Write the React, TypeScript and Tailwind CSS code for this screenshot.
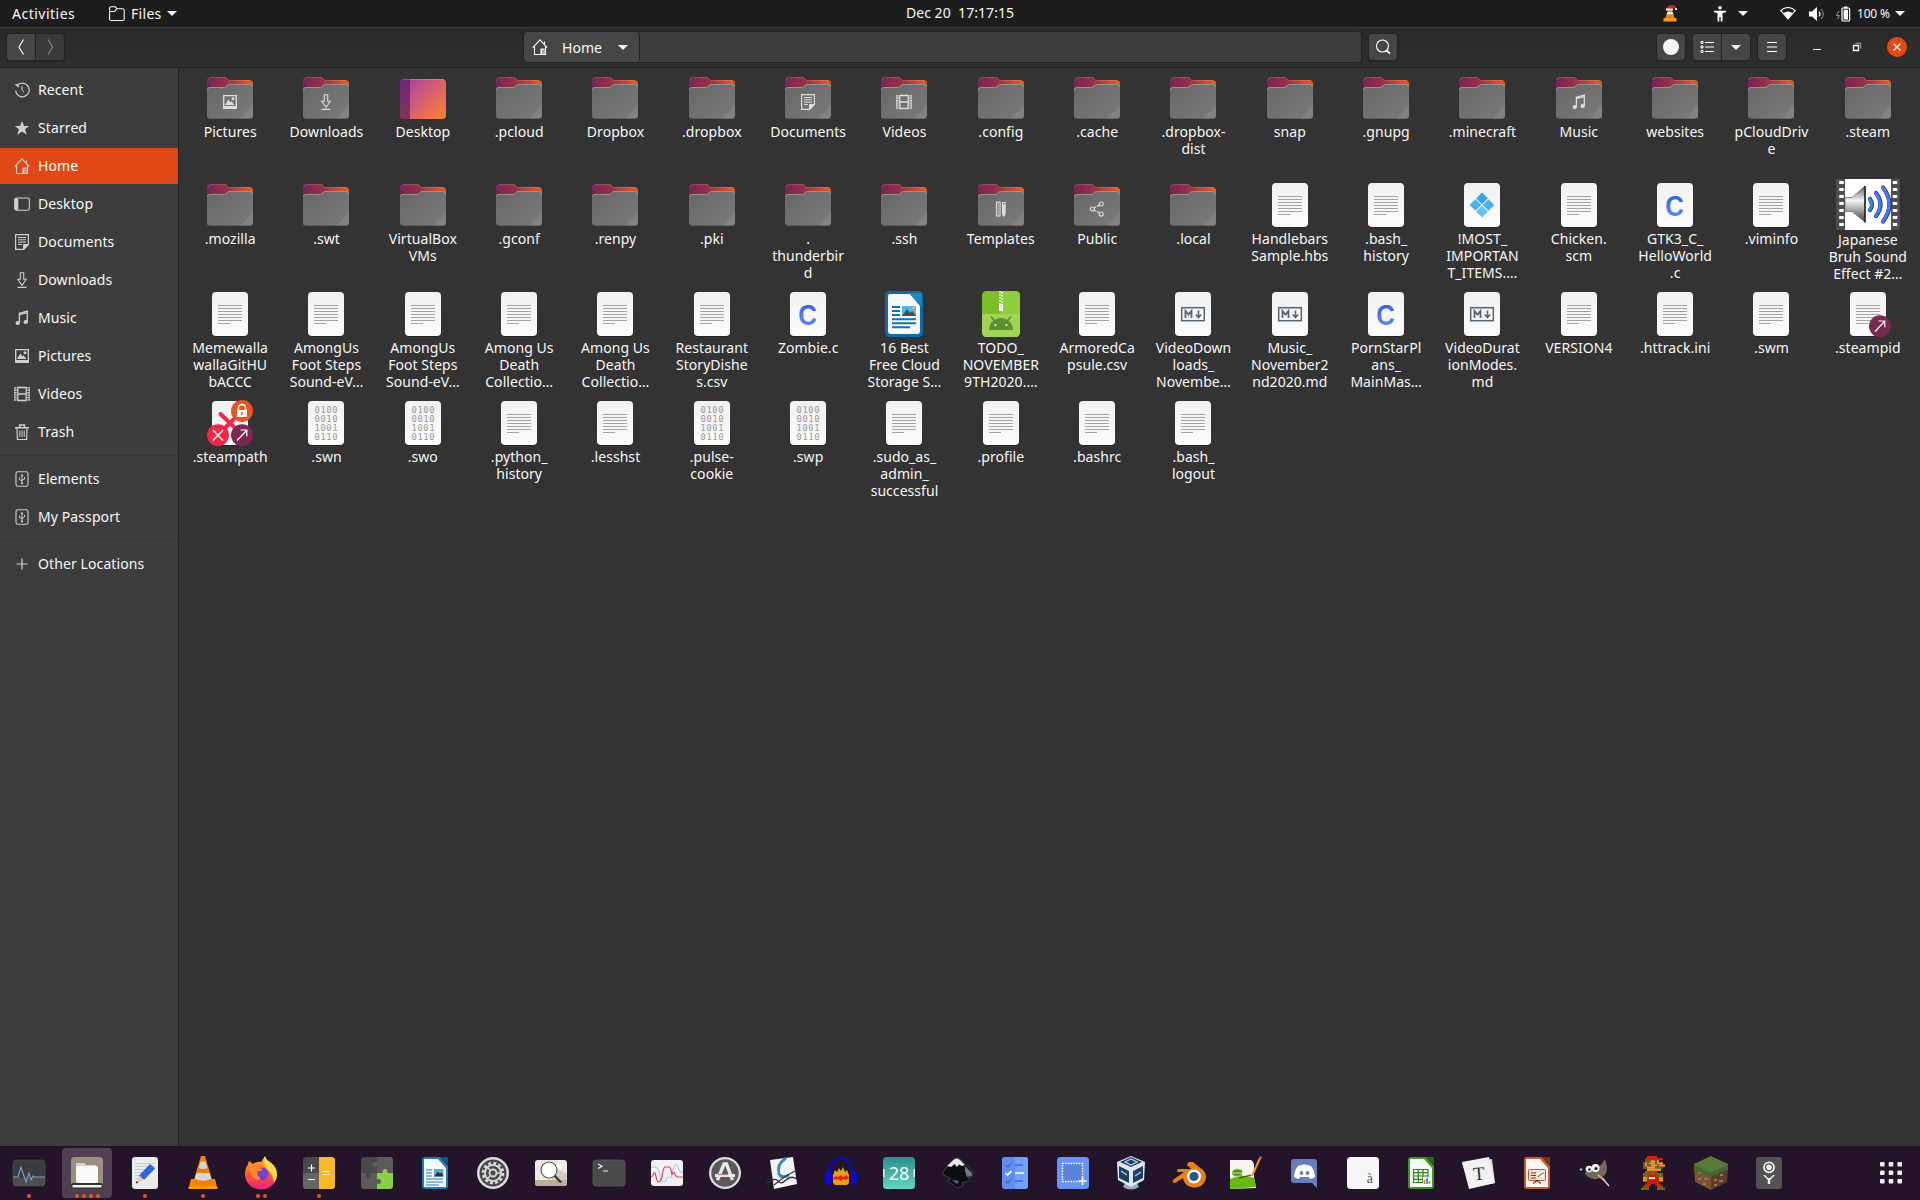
import React from "react";

type Kind = "folder" | "desktop" | "text" | "binary" | "c" | "md" | "reg" | "writer" | "android" | "video" | "link" | "broken";
type Emblem = "pictures" | "downloads" | "documents" | "videos" | "music" | "templates" | "public";
type Item = { k: Kind; e?: Emblem; l: string[] };

const f = (name: string, e?: Emblem): Item => ({ k: "folder", e, l: name.split("|") });
const d = (name: string, k: Kind = "text"): Item => ({ k, l: name.split("|") });

const items: Item[] = [
  f("Pictures", "pictures"), f("Downloads", "downloads"), d("Desktop", "desktop"), f(".pcloud"), f("Dropbox"), f(".dropbox"),
  f("Documents", "documents"), f("Videos", "videos"), f(".config"), f(".cache"), f(".dropbox-|dist"), f("snap"), f(".gnupg"),
  f(".minecraft"), f("Music", "music"), f("websites"), f("pCloudDriv|e"), f(".steam"),
  f(".mozilla"), f(".swt"), f("VirtualBox|VMs"), f(".gconf"), f(".renpy"), f(".pki"), f(".|thunderbir|d"), f(".ssh"),
  f("Templates", "templates"), f("Public", "public"), f(".local"), d("Handlebars|Sample.hbs"), d(".bash_|history"),
  d("!MOST_|IMPORTAN|T_ITEMS.…", "reg"), d("Chicken.|scm"), d("GTK3_C_|HelloWorld|.c", "c"), d(".viminfo"),
  d("Japanese|Bruh Sound|Effect #2…", "video"),
  d("Memewalla|wallaGitHU|bACCC"), d("AmongUs|Foot Steps|Sound-eV…"), d("AmongUs|Foot Steps|Sound-eV…"),
  d("Among Us|Death|Collectio…"), d("Among Us|Death|Collectio…"), d("Restaurant|StoryDishe|s.csv"), d("Zombie.c", "c"),
  d("16 Best|Free Cloud|Storage S…", "writer"), d("TODO_|NOVEMBER|9TH2020.…", "android"), d("ArmoredCa|psule.csv"),
  d("VideoDown|loads_|Novembe…", "md"), d("Music_|November2|nd2020.md", "md"), d("PornStarPl|ans_|MainMas…", "c"),
  d("VideoDurat|ionModes.|md", "md"), d("VERSION4"), d(".httrack.ini"), d(".swm"), d(".steampid", "link"),
  d(".steampath", "broken"), d(".swn", "binary"), d(".swo", "binary"), d(".python_|history"), d(".lesshst"),
  d(".pulse-|cookie", "binary"), d(".swp", "binary"), d(".sudo_as_|admin_|successful"), d(".profile"), d(".bashrc"), d(".bash_|logout"),
];

/* 16px symbolic glyphs, drawn in the current colour */
const glyphs: Record<string, React.ReactNode> = {
  recent: <g fill="none" stroke="currentColor"><path d="M3.2 3.6A6.8 6.8 0 1 1 1.6 8.6" strokeWidth="1.2" /><path d="M8 4v4.2l2.2 2" /><path d="M.6 2.2h4v3.6z" fill="currentColor" stroke="none" /></g>,
  star: <path fill="currentColor" d="M8 1l2 5h5.2l-4.1 3.3 1.5 5.4L8 11.6l-4.6 3.1 1.5-5.4L.8 6H6z" />,
  home: <path fill="none" stroke="currentColor" strokeWidth="1.1" d="M.8 8.7L8 .9l7.2 7.8M2.5 7.5v8h11v-8M12.5 5V2.5M9 15v-5h3v5M10 15v-5" />,
  desktop: <g><rect x=".7" y="2" width="14.6" height="12.2" rx="1.6" fill="none" stroke="currentColor" strokeWidth="1.1" /><path d="M1 2.5h3.3v11.4H1z" fill="currentColor" /></g>,
  documents: <g fill="none" stroke="currentColor"><path d="M1.6.6h12.8v10l-4.6 4.8H1.6z" strokeWidth="1.2" /><path d="M4 3.5h8M4 5.8h8M4 8.1h8M4 10.4h4" strokeWidth="1" /><path d="M9.5 15.5v-5h5z" fill="currentColor" /></g>,
  downloads: <path fill="none" stroke="currentColor" strokeWidth="1.1" d="M6.3.8h3.4v6.5h2.5L8 13.4 3.8 7.3h2.5zM3.5 15.4h9" />,
  music: <g><path d="M5.4 12.7V3.2L13.3 1v10.7M5.4 4.7l7.9-2" fill="none" stroke="currentColor" strokeWidth="1.3" /><ellipse cx="3.7" cy="13" rx="2.2" ry="1.9" fill="currentColor" /><ellipse cx="11.7" cy="12" rx="2.2" ry="1.9" fill="currentColor" /></g>,
  pictures: <g><path d="M1.7 1.7h12.6v12.6H1.7z" fill="none" stroke="currentColor" strokeWidth="1.3" /><path d="M1.5 12h13v2.5h-13zM3 11l3.4-5.4 2 3 1.2-1.4L12.4 11z" fill="currentColor" /><circle cx="11" cy="4.8" r="1.5" fill="currentColor" /></g>,
  videos: <g fill="none" stroke="currentColor"><path d="M3.8 1.5h8.4v13H3.8zM3.8 8h8.4" strokeWidth="1.3" /><path d="M1.6 1.2v13.6M14.4 1.2v13.6" strokeWidth="2" strokeDasharray="1.4 1" /><path d="M.6 1v14M15.4 1v14" strokeWidth=".7" /></g>,
  trash: <g fill="none" stroke="currentColor"><path d="M3 4.5l.4 11h9.2l.4-11" strokeWidth="1.2" /><path d="M1 3.7h14M5.6 3V1h4.8v2" strokeWidth="1.5" /><path d="M5.8 6.5v6.5M8 6.5v6.5M10.2 6.5v6.5" /></g>,
  usb: <g fill="none" stroke="currentColor"><rect x="2" y=".7" width="12" height="14.6" rx="1.8" strokeWidth="1.1" /><path d="M8 12V4M5.5 6.5v2L8 10M10.5 6v2L8 9.4" /><path d="M6.6 5L8 2.7 9.4 5zM7 11.7h2v1.6H7z" fill="currentColor" stroke="none" /></g>,
  plus: <path d="M8 2.5v11M2.5 8h11" stroke="currentColor" strokeWidth="1.2" />,
  templates: <g><path d="M3.5 1h3.6v14H3.5z" fill="none" stroke="currentColor" strokeWidth="1.1" /><path d="M5.4 1.5v13" stroke="currentColor" strokeWidth="1.4" strokeDasharray="1 1" /><path d="M9 1h3.6v11.5l-1 3h-1.600l-1-3z" fill="currentColor" /><path d="M10 2h1.5v1.5H10z" fill="#777" /></g>,
  public: <g fill="none" stroke="currentColor" strokeWidth="1.2"><circle cx="3.3" cy="8" r="2" /><circle cx="12.2" cy="3" r="2" /><circle cx="12.2" cy="13" r="2" /><path d="M5 7l5.4-3M5 9l5.4 3" strokeDasharray="2.4 .8" /></g>,
};

const Glyph = ({ n, className = "" }: { n: string; className?: string }) => (
  <svg viewBox="0 0 16 16" className={`size-4 shrink-0 ${className}`}>{glyphs[n]}</svg>
);

const Sheet = () => <><rect x="6" y="3" width="36" height="44" rx="4" fill="#000" opacity=".3" /><rect x="6" y="2" width="36" height="44" rx="4" fill="url(#paper)" /></>;
const Lines = () => <path d="M12 15.5h24M12 18.5h24M12 21.5h24M12 24.5h24M12 27.5h24M12 30.5h24M12 33.5h12" stroke="#a3a3a3" />;
const LinkBadge = () => <><circle cx="36" cy="36.2" r="11" fill="#7a2a50" /><path d="M31 41.5l9.5-10M34.5 31h6.3v6.3" fill="none" stroke="#fff" strokeWidth="1.2" /></>;

function FileIcon({ item }: { item: Item }) {
  switch (item.k) {
    case "folder":
      return (
        <svg viewBox="0 0 48 48" className="size-12">
          <path d="M1 7a4 4 0 0 1 4-4h14c2 0 2 3 4 3h20.500a3.500 3.500 0 0 1 3.500 3.500V22H1z" fill="url(#fback)" />
          <path d="M1.500 6.500A4 4 0 0 1 5 3.500h14c2 0 2 3 4 3h20.500" fill="none" stroke="#fff" opacity=".15" />
          <path d="M1 16a3 3 0 0 1 3-3h14.500c2 0 2.500-3 4.500-3H44a3 3 0 0 1 3 3v28.500a3.500 3.500 0 0 1-3.500 3.500h-39A3.500 3.500 0 0 1 1 41.500z" fill="url(#ffront)" />
          <path d="M1.500 16a2.500 2.500 0 0 1 2.500-2.500h14.700c2 0 2.500-3 4.500-3H44a2.500 2.500 0 0 1 2.500 2.500" fill="none" stroke="#939393" />
          <path d="M47 31v10.500a3.500 3.500 0 0 1-3.500 3.500H34z" fill="#fff" opacity=".07" />
          <path d="M2 43.500a3.500 3.500 0 0 0 2.500 1h39a3.500 3.500 0 0 0 2.500-1" fill="none" stroke="#000" opacity=".2" />
          {item.e && <g transform="translate(16 20)" color="#dedede">{glyphs[item.e]}</g>}
        </svg>
      );
    case "desktop":
      return (
        <svg viewBox="0 0 48 48" className="size-12">
          <rect x="1" y="5" width="46" height="40" rx="4" fill="url(#desk)" />
          <path d="M5 5h6v40H5a4 4 0 0 1-4-4V9a4 4 0 0 1 4-4z" fill="url(#deskside)" />
          <path d="M4 5.500h40" stroke="#fff" opacity=".2" />
        </svg>
      );
    case "writer":
      return (
        <svg viewBox="0 0 48 48" className="size-12">
          <rect x="5" y="1" width="38" height="46" rx="4.500" fill="#0e6cab" />
          <path d="M10 4h20l10 12v25a3 3 0 0 1-3 3H11a3 3 0 0 1-3-3V6a2 2 0 0 1 2-2z" fill="#fafafa" />
          <path d="M29 3h11a1.500 1.500 0 0 1 1.500 1.500V16z" fill="#2487c2" />
          <path d="M12 17h8M12 21h8M12 25h8M12 29.200h24M12 33.200h24M12 37.200h18" stroke="#1173b3" strokeWidth="2" />
          <rect x="22" y="16" width="14" height="10" fill="#56b4e6" /><path d="M22 26l5-7 3 4 2-2 4 5z" fill="#4c4c4c" /><circle cx="33.500" cy="18" r="1.500" fill="#f5c211" />
        </svg>
      );
    case "android":
      return (
        <svg viewBox="0 0 48 48" className="size-12">
          <rect x="5" y="1" width="38" height="46" rx="4.500" fill="#7cbf2b" /><path d="M24 1h14.500A4.500 4.500 0 0 1 43 5.500V24H24z" fill="#8fcf3c" /><path d="M5 24h38v18.500a4.500 4.500 0 0 1-4.500 4.500h-29A4.500 4.500 0 0 1 5 42.500z" fill="#a0d453" />
          <path d="M23 1v13M25 2v12" stroke="#fff" strokeWidth="1.600" strokeDasharray="1.500 1.500" /><path d="M22 14h4v7h-4z" fill="#fff" /><path d="M23.500 15.500h1v2h-1z" fill="#7cbf2b" />
          <path d="M12 40a12 12 0 0 1 24 0z" fill="#5b9131" /><path d="M14 26.500l4 5M34 26.500l-4 5" stroke="#5b9131" strokeWidth="1.800" /><path d="M17.500 34h2v2h-2zM28.500 34h2v2h-2z" fill="#d8f0b4" />
        </svg>
      );
    case "video":
      return (
        <svg viewBox="0 0 64 51" className="mb-px h-[51px] w-16">
          <path d="M0 0h64v51H0z" fill="#4e4e4e" /><path d="M9 0h46v51H9z" fill="#fff" />
          <path d="M5.500 2v49M59 2v49" stroke="#fff" strokeWidth="4.500" strokeDasharray="3 4" />
          <path d="M9 18.500h7L29 7v36L16 32.500H9z" fill="url(#spk)" stroke="#555" strokeWidth=".6" /><path d="M29 7v36.500" stroke="#222" strokeWidth="1.600" />
          <g fill="none" stroke="#243a80" strokeWidth="4.200" strokeLinecap="round"><path d="M34 20q4 5.500 0 11M40 14q9 11.500 0 23M47 8.500q13 17 0 34" /></g>
          <g fill="none" stroke="#4779f2" strokeWidth="3" strokeLinecap="round"><path d="M33.600 20q4 5.500 0 11M39.600 14q9 11.500 0 23M46.600 8.500q13 17 0 34" /></g>
        </svg>
      );
    default:
      return (
        <svg viewBox="0 0 48 48" className="size-12">
          <Sheet />
          {(item.k === "text" || item.k === "link") && <Lines />}
          {item.k === "link" && <LinkBadge />}
          {item.k === "binary" && (
            <g fill="#999" fontFamily="DejaVu Sans Mono" fontSize="8.800">
              {["0100", "0010", "1001", "0110"].map((t, i) => <text key={t} x="12.500" y={14.400 + i * 9} textLength="23">{t}</text>)}
            </g>
          )}
          {item.k === "c" && <text transform="translate(23.500 34.500) scale(.86 1)" textAnchor="middle" fontFamily="Liberation Sans" fontWeight="700" fontSize="30" fill="url(#cblue)">C</text>}
          {item.k === "md" && (
            <g fill="none" stroke="#566673"><rect x="12.700" y="17.700" width="22.600" height="13" strokeWidth="1.500" /><path d="M16.500 28v-7l3 3.500 3-3.500v7" strokeWidth="1.800" /><path d="M29.500 20.500v6M26.800 24.500l2.700 3 2.700-3" strokeWidth="1.600" /></g>
          )}
          {item.k === "reg" && (
            <g transform="translate(24 24) rotate(45)"><path d="M-8.800-8.800h8.300v8.300h-8.300z" fill="#35a5e5" /><path d="M.5-8.800h8.300v8.300H.5z" fill="#4bb1ea" /><path d="M-8.800.5h8.300v8.300h-8.300z" fill="#4bb1ea" /><path d="M.5.5h8.300v8.300H.5z" fill="#66c2f1" /></g>
          )}
          {item.k === "broken" && (
            <><path d="M14.500 15L24 24l9 9M24 24l-9 9M24 24l9-9" stroke="#ee2b4c" strokeWidth="4" strokeLinecap="round" />
              <circle cx="36" cy="12" r="11" fill="#e95420" /><path d="M31 11h10v7H31z" fill="#fff" /><path d="M32.500 11V9a3.500 3.500 0 0 1 7 0v2" fill="none" stroke="#fff" strokeWidth="1.500" /><path d="M36 13v3" stroke="#e95420" strokeWidth="1.500" />
              <circle cx="12" cy="36.200" r="11" fill="#f0274a" /><path d="M7 31l10 10.500M17 31L7 41.500" stroke="#fff" strokeWidth="1.200" /><LinkBadge /></>
          )}
        </svg>
      );
  }
}

const places: [string, string][][] = [
  [["recent", "Recent"], ["star", "Starred"], ["home", "Home"], ["desktop", "Desktop"], ["documents", "Documents"], ["downloads", "Downloads"], ["music", "Music"], ["pictures", "Pictures"], ["videos", "Videos"], ["trash", "Trash"]],
  [["usb", "Elements"], ["usb", "My Passport"]],
  [["plus", "Other Locations"]],
];

const Arrow = ({ className = "" }: { className?: string }) => (
  <svg viewBox="0 0 10 5" className={`h-[5px] w-2.5 shrink-0 ${className}`}><path d="M0 0h10L5 5z" fill="currentColor" /></svg>
);

const marioRows = [
  "....RRRRR.....", "...RRRRRRRRR..", "...BBBOOBO....", "..BOBOOOBOOO..", "..BOBBOOOBOOO.", "..BBOOOOBBBB..", "....OOOOOOO...",
  "...BBRBBB.....", "..BBBRBBRBBB..", "..BBBRRRRBBB..", "..OOBWWWBROO..", "..OORRRRRROO..", "....RRRRRR....", "...RRR..RRR...", "..BBB....BBB..", ".BBBB....BBBB.",
];
const marioColors: Record<string, string> = { R: "#d8200c", B: "#7d6508", O: "#f49a38", W: "#dfe5f5" };

const box = (c: string) => <rect width="32" height="32" rx="3.500" fill={c} />;

/* launcher icons on a 32 x 32 canvas */
const dock: { name: string; dots?: number; art: React.ReactNode }[] = [
  { name: "System Monitor", dots: 1, art: <><rect y="3" width="32" height="26" rx="3" fill="#3a3c3d" stroke="#505050" strokeWidth=".6" /><path d="M0 20h32v6a3 3 0 0 1-3 3H3a3 3 0 0 1-3-3z" fill="#4b4d4e" /><path d="M0 20h5l3-10 5 15 3-9 2 7 2-4 2 1h10" fill="none" stroke="#7f9fd0" strokeWidth="1.100" /></> },
  { name: "Files", dots: 4, art: <>{box("#9a8f7e")}<rect y="26" width="32" height="6" rx="2" fill="#333" /><path d="M1.500 28h29v2.500h-29z" fill="#f0efe9" /><path d="M5 6h8l2 2h10v5H5z" fill="#dcd5ca" /><rect x="5" y="9" width="22" height="17" rx="2" fill="#fcfaf8" /></> },
  { name: "Text Editor", dots: 1, art: <><rect x="3" width="26" height="32" rx="3" fill="#ececec" /><path d="M6 6.500h20M6 9.500h20M6 12.500h20M6 15.500h14M6 18.500h10M6 21.500h8" stroke="#c9c9c9" /><path d="M21 7l5 4.500L15 23l-5-4.500z" fill="#2f66d8" /><path d="M10 18.500l5 4.500-8 3.500z" fill="#f3c9a0" /><path d="M7.500 24l2 1.500-2.500 1z" fill="#222" /></> },
  { name: "VLC", dots: 1, art: <><path d="M4 22h24l2.500 10h-29z" fill="#f48c0a" /><path d="M1.500 30.500h29" stroke="#ffb020" /><path d="M14-1h4l8 27q-10 5-20 0z" fill="#f07d0c" /><path d="M13.600 4.500h4.800l2 6.500q-4.400 2-8.800 0zM9.400 16h13.200l1.800 6q-8.400 3.500-16.800 0z" fill="#d6d6d6" /></> },
  { name: "Firefox", dots: 2, art: <><path d="M1 11Q3 8 4 4q3 2 4 3 4-3 8-2l4-6q1 4 5 6 7 5 7 13A16 15 0 0 1 0 17q0-4 1-6z" fill="url(#ffx)" /><path d="M20-1q1 4 5 6 7 5 7 13 0 4-3 8-1-9-6-13-6-5-3-14z" fill="#ffda3d" /><circle cx="17" cy="17" r="6.500" fill="#7542d8" /><path d="M4 10q6-2 9 1l5 1q-3 3-6 3 0 4 4 7-6 2-9-3-2-4-3-9z" fill="#ff8a22" /></> },
  { name: "Calculator", dots: 1, art: <>{box("#4a4a4a")}<path d="M0 16h16v16H3.500A3.500 3.500 0 0 1 0 28.500z" fill="#656565" /><path d="M16 0h12.500A3.500 3.500 0 0 1 32 3.500v25a3.500 3.500 0 0 1-3.500 3.500H16z" fill="#fbb826" /><path d="M8.500 7.500v7M5 11h7M5 22.500h7M19.500 14.500h7M19.500 17.500h7" stroke="#fff" strokeWidth="1.100" /></> },
  { name: "Extensions", art: <>{box("#484848")}<path d="M16 0h12.500A3.500 3.500 0 0 1 32 3.500V16H16zM0 16h16v16H3.500A3.500 3.500 0 0 1 0 28.500z" fill="#5b5b5b" /><path d="M16 16h16v12.500a3.500 3.500 0 0 1-3.500 3.500H16z" fill="#8bcf45" /><circle cx="14" cy="7.500" r="2.500" fill="#606060" /><circle cx="7" cy="18" r="2.500" fill="#444" /><circle cx="24" cy="14.500" r="2.500" fill="#8bcf45" /><circle cx="17.500" cy="24.500" r="2.500" fill="#5b5b5b" /></> },
  { name: "Writer", art: <><path d="M6 0h15l8 9v20a3 3 0 0 1-3 3H6a3 3 0 0 1-3-3V3a3 3 0 0 1 3-3z" fill="#1b7db5" /><path d="M5 2h14l8 9v19H5z" fill="#f5f9fc" /><path d="M21 0h8v8z" fill="#0d5582" /><path d="M7 13h6M7 16h6M7 19h6M7 22h17M7 25h17M7 28h13" stroke="#1b7db5" strokeWidth="1.200" /><path d="M15 12h9.500v7.500H15z" fill="#5aaedb" /><path d="M15 19.500l4-5 2 2.500 1.500-2 2 4.500z" fill="#333" /></> },
  { name: "Settings", art: <><circle cx="16" cy="16" r="16" fill="#dcdcdc" /><circle cx="16" cy="16" r="13.500" fill="#474747" /><circle cx="16" cy="16" r="9.800" fill="none" stroke="#d5d5d5" strokeWidth="3" strokeDasharray="3 2.130" /><circle cx="16" cy="16" r="8" fill="none" stroke="#d5d5d5" strokeWidth="2" /><circle cx="16" cy="16" r="3.500" fill="none" stroke="#d5d5d5" strokeWidth="2" /><path d="M13 13L9 9M13 19l-4 4M20 16h5" stroke="#d5d5d5" strokeWidth="1.600" /></> },
  { name: "Image Viewer", art: <><rect y="3" width="32" height="26" rx="3" fill="#eceae2" /><path d="M0 23h32v3a3 3 0 0 1-3 3H3a3 3 0 0 1-3-3z" fill="#b8b09a" /><path d="M24 13l8 4v6H16z" fill="#d5cebc" /><path d="M19.500 18.500l6.500 7" stroke="#333" strokeWidth="2.200" /><circle cx="14" cy="13" r="8" fill="#fff" stroke="#555" strokeWidth="1.200" /><circle cx="24" cy="9" r="2.500" fill="#fff" /></> },
  { name: "Terminal", art: <><rect y="3" width="32" height="26" rx="3" fill="#4a4a4a" stroke="#666" strokeWidth=".6" /><path d="M5 7l4 2.200-4 2.300M10 14h5" fill="none" stroke="#eee" strokeWidth="1.200" /></> },
  { name: "Power Statistics", art: <><rect y="3" width="32" height="26" rx="3" fill="#f2f2f2" /><path d="M0 11q6-3 8 3c2 7 0 11 4 11 5 0 3-5 5-5 4 0 2 4 5-7 2-8 4-6 6 0 2 3 3 2 4 2" fill="none" stroke="#a9cdf0" strokeWidth="1.200" /><path d="M0 20c2 0 2.500-6 4-4 1.500 3 1 9 4 9 4 0 3-15 6-15h4c3 0 2 11 4 6 2-3 2 5 5 4h5" fill="none" stroke="#e0415f" strokeWidth="1.200" /></> },
  { name: "Software", art: <><circle cx="16" cy="16" r="16" fill="#dedede" /><circle cx="16" cy="16" r="13.700" fill="#5a5a5a" /><path d="M8.500 23L15 7h2.500l6 16" fill="none" stroke="#e9e9e9" strokeWidth="3.400" /><path d="M6 18.500h20" stroke="#e9e9e9" strokeWidth="3" /><path d="M9 17.500h10" stroke="#b07aa8" strokeWidth="1" /></> },
  { name: "Document Viewer", art: <><path d="M3 3l23-3 4 27-23 5z" fill="#f2f4f5" /><path d="M19 1q-10 7-7 16 3 5 10 1" fill="none" stroke="#338ac2" strokeWidth="2.800" /><path d="M0 26q8-6 11-2t8-1 11-1M7 28q12-10 23-15" fill="none" stroke="#333" strokeWidth="1.300" /></> },
  { name: "Audacity", art: <><path d="M4 19C3-4 29-4 28 19" fill="none" stroke="#0808d8" strokeWidth="2" /><path d="M8 18l2-5 2 2 2-4 2 3 2-4 2 5 2-2 2 5v8l-2 2H10l-2-2z" fill="#e4a11b" /><path d="M8 21l3-2 2 1 3-2 2 2 3-2 4 3-4 2-3-1-2 2-3-2-3 1z" fill="#f02012" /><path d="M5 13q-7 1-5 11l3 4h4V13zM27 13q7 1 5 11l-3 4h-3V13z" fill="#0a0ae0" /></> },
  { name: "Calendar", art: <>{box("url(#cal)")}<path d="M0 12h1.500v8H0zM30.500 12H32v8h-1.500z" fill="#eee" /><text x="16" y="22.500" textAnchor="middle" fontFamily="Noto Sans" fontSize="18" fill="#f3fffd">28</text></> },
  { name: "Inkscape", art: <><path d="M16 1q2 0 4 2l11 11q2.500 3 0 5l-4 2 2 3-5 1-3 1 1 3-6 2-5-4-5-3 4-2-7-4q-2-2 0-4L12 3q2-2 4-2z" fill="#0c0e12" stroke="#4c5260" strokeWidth=".7" /><path d="M16 1.500q1.500 0 3 1.500l5 5-3 1-3-1.500L16 10l-2.500-3L10 10l-4-1 7-6.500q1.500-1 3-1z" fill="#e6e8ec" /><path d="M24 9l7 7q1 2-1 3l-4 1-2-6z" fill="#6f7887" /><path d="M11 23l7 1-2 3z" fill="#5c6a7e" /></> },
  { name: "To Do", art: <><rect x="3" width="26" height="32" rx="3" fill="#5f8df2" /><path d="M16 0h10a3 3 0 0 1 3 3v26a3 3 0 0 1-3 3H16z" fill="#76a0f7" /><path d="M6.500 8l2 2 4-4M6.500 24l2 2 4-4M16 8h8M16 24h8" fill="none" stroke="#4168c4" strokeWidth="1.400" /><path d="M6.500 16l2 2 4-4M16 16h9" fill="none" stroke="#fff" strokeWidth="1.700" /></> },
  { name: "Screenshot", art: <>{box("#6794f5")}<rect x="5.500" y="6.500" width="20" height="18" fill="#5a84dc" stroke="#fff" strokeWidth="1.400" strokeDasharray="1.500 1.200" /><path d="M25.500 20v8M21.500 24h8" stroke="#fff" strokeWidth="1.600" /></> },
  { name: "VirtualBox", art: <><path d="M10 26h12l2 4q-8 5-16 0z" fill="#92adc6" /><path d="M16-1l14 6-1 18-13 7-13-7L2 5z" fill="#dfe8f0" /><path d="M16 0l11 5-11 5L5 5zM4 9l10 5v12L4 21zM28 9l-10 5v12l10-5z" fill="#1b3e66" /><path d="M10 5l6-3 6 3-6 3zM6 14l6 4M20 19l6-4" fill="none" stroke="#b9d0e4" strokeWidth="1.300" /></> },
  { name: "Blender", art: <><path d="M17 5l3 0L31 14q4 6 0 12-5 6-13 4-7-2-8-9L2 26q-3 0-2-3l11-8H5q-2-1 0-3h13l-4-4q0-2 2-3z" fill="#ea7f14" /><circle cx="21" cy="19.500" r="7" fill="#fff" /><circle cx="21" cy="19.500" r="4.600" fill="#265787" /></> },
  { name: "Notepadqq", art: <><path d="M-1 3h21q2 1 3 4v13l2 11-26 1z" fill="#f5f5ed" /><path d="M-1 22q12-6 24-1l2 9-26 2z" fill="#69b712" /><path d="M1 15q5-7 11 0-4 5-11 3z" fill="#82c83e" /><path d="M2 14h9M3 18h8M8 21l12-3" stroke="#265010" strokeWidth="1.100" /><path d="M29 1L21 19" stroke="#ed9b22" strokeWidth="2" /><path d="M30-.5l-1.500 3.500" stroke="#c96a6a" strokeWidth="2" /></> },
  { name: "Discord", art: <><path d="M5 2h20a3 3 0 0 1 3 3v26l-5-5H5a3 3 0 0 1-3-3V5a3 3 0 0 1 3-3z" fill="#687ebb" /><path d="M9 9q6-3 13 0 4 5 4 11-3 2-5 2l-1-2h-9l-1 2q-2 0-5-2 0-6 4-11z" fill="#fff" /><circle cx="12.500" cy="16" r="1.900" fill="#687ebb" /><circle cx="18.500" cy="16" r="1.900" fill="#687ebb" /></> },
  { name: "Characters", art: <>{box("#f6f6f6")}<text x="23" y="26" textAnchor="middle" fontFamily="Liberation Serif" fontSize="14" fill="#555">à</text></> },
  { name: "Calc", art: <><path d="M6 0h15l8 9v20a3 3 0 0 1-3 3H6a3 3 0 0 1-3-3V3a3 3 0 0 1 3-3z" fill="#399924" /><path d="M5 2h14l8 9v19H5z" fill="#f8fcf7" /><path d="M21 0h8v8z" fill="#1f6e10" /><path d="M8.500 12.500h14.500v13H8.500zM8.500 15.700h14.500M8.500 19h14.500M8.500 22.300h14.500M13.300 12.500v13M18 12.500v13" fill="none" stroke="#2c851b" strokeWidth="1.200" /><path d="M18 20h7v7h-7z" fill="#f2f2f2" /><path d="M19.500 27v-4M24.500 27v-3" stroke="#e0761f" strokeWidth="1.600" /><path d="M22 27v-6" stroke="#3b7fc4" strokeWidth="1.600" /></> },
  { name: "Typora", art: <><path d="M-1 6L29 2l3 24-24 5z" fill="#d8d8d8" /><path d="M-1 5L26 0l6 26L6 32z" fill="#f2f2f2" /><text x="16" y="23" textAnchor="middle" fontFamily="Liberation Serif" fontSize="19" fill="#333" transform="rotate(-5 16 16)">T</text></> },
  { name: "Impress", art: <><path d="M6 0h15l8 9v20a3 3 0 0 1-3 3H6a3 3 0 0 1-3-3V3a3 3 0 0 1 3-3z" fill="#cb5c27" /><path d="M5 2h14l8 9v19H5z" fill="#fbf7f5" /><path d="M21 0h8v8z" fill="#833008" /><rect x="7.500" y="12.500" width="17" height="11" rx="1" fill="#f7ded0" stroke="#c65320" /><path d="M10 16h5M10 18.500h5M10 21h5M12 26.500l4-3 4 3" fill="none" stroke="#6b3a22" strokeWidth="1.200" /><path d="M17 15h6v5h-6z" fill="#fff" /><path d="M17 20l3-3 3-1" fill="none" stroke="#3c9a3c" strokeWidth="1.200" /></> },
  { name: "GIMP", art: <><path d="M26 2q5 14-3 18-8 5-15-1l-3-3 6-3q9 0 15-11z" fill="#6f6a5c" /><ellipse cx="3" cy="14" rx="3.200" ry="4.500" fill="#1b1f24" /><circle cx="2" cy="12.500" r="1.200" fill="#b8bcc0" /><circle cx="10" cy="12" r="3.300" fill="#f6f6f6" /><circle cx="16.500" cy="11" r="4" fill="#f6f6f6" /><circle cx="10.500" cy="12.500" r="1.300" fill="#111" /><circle cx="17" cy="11.500" r="1.600" fill="#111" /><path d="M19 18l6 5" stroke="#eda34a" strokeWidth="2.200" /><path d="M24 22l6 7" stroke="#d8dde2" strokeWidth="1.400" /></> },
  { name: "Super Mario", art: <g transform="translate(2 -1)">{marioRows.flatMap((r, y) => r.split("").map((c, x) => c === "." ? null : <rect key={`${x}-${y}`} x={x * 2} y={y * 2.120} width="2.060" height="2.180" fill={marioColors[c]} />))}</g> },
  { name: "Minecraft", art: <><path d="M-1 7L16-1l17 8v3l-17 9-17-9z" fill="#57793a" /><path d="M-1 9l17 8v16L0 25z" fill="#7a5239" /><path d="M33 9l-17 8v16l16-8z" fill="#5c3d2a" /><path d="M-1 8l17 8v4l-3-2-2 1-3-3-3 1-3-3-3 1zM33 8l-17 8v4l3-2 3 0 3-3 2 1 3-3 3 1z" fill="#3f6a2c" /><path d="M3 16h3M9 22h4M3 22h3M8 27h3M19 23h3M25 18h3M24 24h4M19 28h3" stroke="#9b7454" strokeWidth="2" /></> },
  { name: "Passwords", art: <><rect x="3" width="26" height="32" rx="3" fill="#525252" /><circle cx="16" cy="10.300" r="5" fill="none" stroke="#f0f0f0" strokeWidth="1.800" /><circle cx="16" cy="10.300" r="2.800" fill="#f0f0f0" /><path d="M10 18h2l3 3h2l3-3h2l-4.800 5v4h-2.400v-4z" fill="#f0f0f0" /></> },
];

const btn = "flex h-7 items-center justify-center border border-[#232323] shadow-[0_1px_1px_rgba(0,0,0,.2)]";

export default function App() {
  return (
    <div className="flex h-[1200px] w-[1920px] flex-col overflow-hidden bg-[#333] font-['Noto_Sans',sans-serif] text-[14px] leading-[17px] tracking-[.05px] text-[#f7f7f7]">
      <svg className="absolute size-0">
        <defs>
          <linearGradient id="fback"><stop stopColor="#762457" /><stop offset=".45" stopColor="#9a3344" /><stop offset="1" stopColor="#f05a22" /></linearGradient>
          <linearGradient id="ffront" x2="1" y2="1"><stop stopColor="#676767" /><stop offset="1" stopColor="#7b7b7b" /></linearGradient>
          <linearGradient id="desk" x2="1" y2=".8"><stop stopColor="#a23aa6" /><stop offset=".5" stopColor="#d05b78" /><stop offset="1" stopColor="#fb7d36" /></linearGradient>
          <linearGradient id="deskside" x2="0" y2="1"><stop stopColor="#6c2677" /><stop offset="1" stopColor="#833559" /></linearGradient>
          <linearGradient id="paper" x2="0" y2="1"><stop stopColor="#f1f1f1" /><stop offset="1" stopColor="#fcfcfc" /></linearGradient>
          <linearGradient id="cblue" x2="0" y2="1"><stop stopColor="#2456dc" /><stop offset="1" stopColor="#6a92f2" /></linearGradient>
          <linearGradient id="spk" x2="0" y2="1"><stop stopColor="#555" /><stop offset=".4" stopColor="#f4f4f4" /><stop offset="1" stopColor="#444" /></linearGradient>
          <linearGradient id="ffx" x2="0" y2="1"><stop stopColor="#ffb52b" /><stop offset=".55" stopColor="#ff5a36" /><stop offset="1" stopColor="#e8207a" /></linearGradient>
          <linearGradient id="cal" x2="0" y2="1"><stop stopColor="#2c8d8d" /><stop offset="1" stopColor="#62d6bf" /></linearGradient>
        </defs>
      </svg>

      <header className="grid h-[27px] shrink-0 grid-cols-[1fr_auto_1fr] items-center bg-[#1d1d1d]">
        <div className="flex items-center pl-3">
          <span className="w-[97px] tracking-[.5px]">Activities</span>
          <svg viewBox="0 0 16 16" className="size-4"><path d="M.6 13V2.300A1.500 1.500 0 0 1 2 .800h4.500l1.500 2h5.500A1.500 1.500 0 0 1 15.200 4.300V13a1.500 1.500 0 0 1-1.500 1.500H2A1.500 1.500 0 0 1 .6 13zM.6 5.500h4.700l2.500-2.700" fill="none" stroke="currentColor" strokeWidth="1.100" /></svg>
          <span className="ml-1.5 w-9 tracking-[.3px]">Files</span>
          <Arrow />
        </div>
        <span className="-mt-0.5 whitespace-pre">Dec 20  17:17:15</span>
        <div className="flex items-center justify-end pr-[15px]">
          <svg viewBox="0 0 14 17" className="mr-[36px] h-[17px] w-3.5"><path d="M2 14l3-9h4l3 9z" fill="#ef820f" /><path d="M4.500 7h5l.8 2.500H3.700z" fill="#eee" /><path d="M.5 13h13v3.500H.5z" fill="#f39a1c" /><path d="M3 5q1-5 6-5 4 0 4 4l-3-1v2z" fill="#d8201c" /><path d="M3 4.500h7M12 4h2" stroke="#fff" strokeWidth="1.800" /></svg>
          <svg viewBox="0 0 14 16" className="mr-[11px] h-4 w-3.5"><circle cx="7" cy="1.800" r="1.800" fill="#fff" /><path d="M1 4.800h12v1.500L9.500 7v8.500H7.700V11H6.300v4.500H4.500V7L1 6.300z" fill="#fff" /></svg>
          <Arrow className="mr-8" />
          <svg viewBox="0 0 16 13" className="mr-[13px] h-[13px] w-4"><path d="M.8 3.500Q8-2.500 15.200 3.500L8 12z" fill="none" stroke="#fff" strokeWidth="1.100" /><path d="M3.500 6Q8 3 12.500 6L8 12z" fill="#fff" /></svg>
          <svg viewBox="0 0 16 14" className="mr-2.5 h-3.5 w-4"><path d="M0 4.500h3L8 0v14L3 9.500H0z" fill="#fff" /><path d="M10 4.500q2 2.500 0 5" fill="none" stroke="#fff" strokeWidth="1.200" /><path d="M12 2q4.500 5 0 10" fill="none" stroke="#999" /></svg>
          <svg viewBox="0 0 16 16" className="mr-1.5 h-4 w-4"><path d="M4 5L1.500 9.500h3L2.500 13" fill="none" stroke="#999" /><rect x="7" y="2" width="7.600" height="13" rx="1" fill="none" stroke="#fff" strokeWidth="1.200" /><path d="M9 .5h3.500v2H9zM8.600 3.800h4.400v9.700H8.600z" fill="#fff" /></svg>
          <span className="w-[38px] text-[12px] tracking-[-.2px]">100 %</span>
          <Arrow />
        </div>
      </header>

      <div className="flex h-[41px] shrink-0 items-center border-t border-b border-t-[#3c3c3c] border-b-[#232323] bg-linear-to-b from-[#2a2a2a] to-[#2e2e2e] px-1.5 pb-px">
        <button className={`${btn} w-[30px] rounded-l bg-[#464646]`}><svg viewBox="0 0 16 16" className="size-4"><path d="M10.500 .5L6 8l4.500 7.500" fill="none" stroke="#fff" strokeWidth="1.100" /></svg></button>
        <button className={`${btn} -ml-px w-[30px] rounded-r bg-[#3a3a3a]`}><svg viewBox="0 0 16 16" className="size-4"><path d="M6 .5L10.500 8 6 15.500" fill="none" stroke="#888" strokeWidth="1.100" /></svg></button>
        <div className="ml-[458px] flex h-8 w-[839px] items-center rounded border border-[#232323] bg-[#3d3d3d]">
          <button className="flex h-[30px] w-[116px] items-center rounded border-r border-[#222] bg-[#464646] pl-2">
            <Glyph n="home" /><span className="ml-[14px] w-[46px] text-left">Home</span><Arrow className="ml-2.5" />
          </button>
        </div>
        <button className={`${btn} ml-[6px] w-[30px] rounded bg-[#464646]`}><svg viewBox="0 0 16 16" className="size-4"><circle cx="7.500" cy="7" r="6" fill="none" stroke="#fff" strokeWidth="1.100" /><path d="M11.500 11.500l3.500 3" stroke="#fff" strokeWidth="1.800" /></svg></button>
        <div className="ml-auto flex items-center">
          <button className={`${btn} mr-1.5 w-[30px] rounded bg-[#464646]`}><span className="size-4 rounded-full bg-[#f7f7f7]" /></button>
          <button className={`${btn} w-[30px] rounded-l bg-[#464646]`}><svg viewBox="0 0 16 16" className="size-4"><path d="M6 3.500h9M6 8h9M6 12.500h9" stroke="#fff" /><path d="M2 2.500h2v2H2zM2 7h2v2H2zM2 11.500h2v2H2z" fill="none" stroke="#fff" /></svg></button>
          <button className={`${btn} -ml-px mr-1.5 w-[30px] rounded-r bg-[#464646]`}><Arrow /></button>
          <button className={`${btn} w-[30px] rounded bg-[#464646]`}><svg viewBox="0 0 16 16" className="size-4"><path d="M3 3.500h10M3 8h10M3 12.500h10" stroke="#fff" strokeWidth="1.100" /></svg></button>
          <span className="mt-[4px] ml-[26px] h-px w-2 bg-white" />
          <svg viewBox="0 0 10 10" className="ml-[31px] size-2.5"><path d="M1.500 3.500h5v5h-5z" fill="none" stroke="#fff" strokeWidth="1.300" /><path d="M3.500 1.200h5.200v5.300" fill="none" stroke="#aaa" /></svg>
          <span className="mr-[7px] ml-[25px] flex size-5 items-center justify-center rounded-full bg-[#e6490f]"><svg viewBox="0 0 8 8" className="size-2"><path d="M.5.5l7 7M7.500.5l-7 7" stroke="#fff" strokeWidth="1.300" /></svg></span>
        </div>
      </div>

      <div className="flex min-h-0 flex-1">
        <aside className="w-[179px] shrink-0 border-r border-[#242424] bg-[#3d3d3d] pt-1 tracking-[.1px]">
          {places.map((group, gi) => (
            <ul key={gi} className={gi ? "mt-[5px] flex flex-col gap-0.5 border-t border-[#343434] pt-[5px]" : "flex flex-col gap-0.5"}>
              {group.map(([icon, label]) => (
                <li key={label} className={`flex h-9 items-center pl-3.5 ${label === "Home" ? "bg-[#e04916] text-white" : ""}`}>
                  <Glyph n={icon} className="mr-2 text-[#d0d0d0]" /><span className="-mt-0.5">{label}</span>
                </li>
              ))}
            </ul>
          ))}
        </aside>
        <main className="grid min-w-0 flex-1 grid-cols-18 grid-rows-[107px_109px_109px_109px] content-start bg-[#333] pt-1.5 pr-1 pl-[3px]">
          {items.map((it, i) => (
            <div key={i} className={`flex min-w-0 flex-col items-center ${it.k === "video" ? "-mt-0.5" : ""}`}>
              <FileIcon item={it} />
              <div className={`text-center ${it.k === "video" ? "" : "mt-px"}`}>
                {it.l.map((line, j) => <div key={j} className="whitespace-nowrap">{line}</div>)}
              </div>
            </div>
          ))}
        </main>
      </div>

      <nav className="flex h-[54px] shrink-0 items-center bg-[#231429]">
        {dock.map((a) => (
          <div key={a.name} title={a.name} className={`relative mx-1 flex size-[50px] shrink-0 items-center justify-center rounded-sm ${a.name === "Files" ? "bg-[#4e3f52]" : ""}`}>
            <svg viewBox="0 0 32 32" className="size-8 overflow-visible">{a.art}</svg>
            {a.dots && <span className="absolute bottom-0 flex gap-[3px]">{Array.from({ length: a.dots }, (_, i) => <i key={i} className="size-1 rounded-full bg-[#e95420]" />)}</span>}
          </div>
        ))}
        <svg viewBox="0 0 22 22" className="mr-[18px] ml-auto size-[22px]">
          {[0, 1, 2].flatMap((y) => [0, 1, 2].map((x) => <rect key={`${x}${y}`} x={x * 8.700} y={y * 8.500} width="4.600" height="4.600" rx="1" fill="#f2f2f2" />))}
        </svg>
      </nav>
    </div>
  );
}
